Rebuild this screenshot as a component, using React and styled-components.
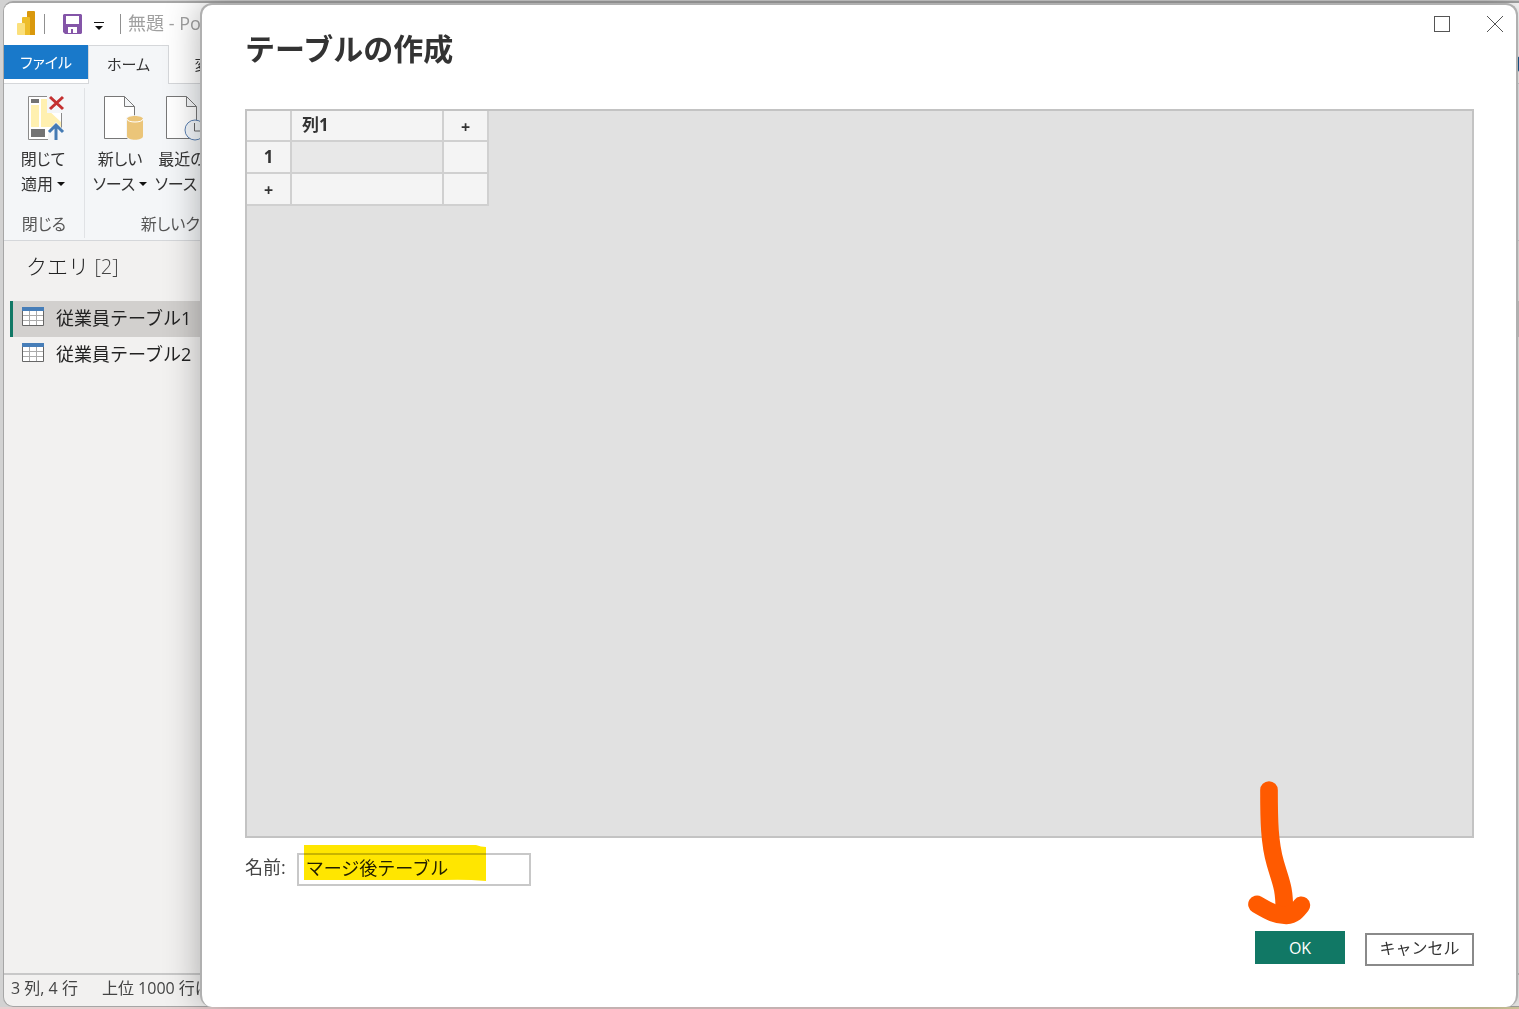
import { useState } from 'react';
import styled, { createGlobalStyle } from 'styled-components';

const App = () => {
  const [name, setName] = useState('マージ後テーブル');

  return (
    <Desktop>
      <GlobalStyle />
      <Window>
        <TitleBar>
          <LogoIcon />
          <Divider />
          <SaveIcon />
          <QuickMenuIcon />
          <Divider />
          <span className="caption">無題 - Power Query</span>
        </TitleBar>
        <Tabs>
          <FileTab type="button">ファイル</FileTab>
          <Tab type="button" $active>
            ホーム
          </Tab>
          <Tab type="button">変換</Tab>
          <HelpDot />
        </Tabs>
        <Ribbon>
          <Group $width={81} $indent={10}>
            <div className="buttons">
              <RibbonButton type="button">
                <CloseApplyIcon />
                <span>閉じて</span>
                <span>
                  適用
                  <Caret />
                </span>
              </RibbonButton>
            </div>
            <div className="groupName">閉じる</div>
          </Group>
          <Group $width={200} $indent={6}>
            <div className="buttons">
              <RibbonButton type="button">
                <NewSourceIcon />
                <span>新しい</span>
                <span>
                  ソース
                  <Caret />
                </span>
              </RibbonButton>
              <RibbonButton type="button">
                <RecentSourceIcon />
                <span>最近の</span>
                <span>
                  ソース
                  <Caret />
                </span>
              </RibbonButton>
            </div>
            <div className="groupName">新しいクエリ</div>
          </Group>
        </Ribbon>
        <Queries>
          <h2>
            クエリ <span>[2]</span>
          </h2>
          <ul>
            <QueryItem $selected>
              <TableIcon />
              従業員テーブル1
            </QueryItem>
            <QueryItem>
              <TableIcon />
              従業員テーブル2
            </QueryItem>
          </ul>
        </Queries>
        <StatusBar>
          <span>3 列, 4 行</span>
          <span>上位 1000 行に</span>
        </StatusBar>
      </Window>

      <Dialog role="dialog" aria-labelledby="dialogTitle">
        <WindowButtons>
          <button type="button" aria-label="最大化">
            <svg width="18" height="18" viewBox="0 0 18 18">
              <rect x="1.5" y="1.5" width="15" height="15" />
            </svg>
          </button>
          <button type="button" aria-label="閉じる">
            <svg width="18" height="18" viewBox="0 0 18 18">
              <path d="M1 1l16 16M17 1L1 17" />
            </svg>
          </button>
        </WindowButtons>
        <DialogTitle id="dialogTitle">テーブルの作成</DialogTitle>
        <GridPanel>
          <Grid>
            <thead>
              <tr>
                <th className="side" aria-label="行" />
                <th className="column">列1</th>
                <th className="side plus">+</th>
              </tr>
            </thead>
            <tbody>
              <tr>
                <th>1</th>
                <td className="selected" />
                <td />
              </tr>
              <tr>
                <th className="plus">+</th>
                <td />
                <td />
              </tr>
            </tbody>
          </Grid>
        </GridPanel>
        <NameRow>
          <label htmlFor="tableName">名前:</label>
          <NameField>
            <input
              id="tableName"
              type="text"
              value={name}
              onChange={(e) => setName(e.target.value)}
            />
            <Marker viewBox="0 0 182 36">
              <path d="M0 0H172Q177 2 182 2V36Q160 34 140 35H0Z" />
            </Marker>
          </NameField>
        </NameRow>
        <Actions>
          <OkWrap>
            <OkButton type="button">OK</OkButton>
            <Arrow viewBox="78 30 198 438">
              <path d="M147 60C147 150 148 218 166 280C182 336 193 350 193 420" />
              <path d="M111 403C150 426 170 436 198 436C222 434 230 424 244 406" />
            </Arrow>
          </OkWrap>
          <CancelButton type="button">キャンセル</CancelButton>
        </Actions>
      </Dialog>
    </Desktop>
  );
};

export default App;

const LogoIcon = () => (
  <svg width="18" height="24" viewBox="0 0 18 24">
    <path d="M10 1q0-1 1-1h6q1 0 1 1v23h-8z" fill="#d9980c" />
    <path d="M5 7q0-1 1-1h6q1 0 1 1v17H5z" fill="#edbd2a" />
    <path d="M0 13q0-1 1-1h6q1 0 1 1v11H1q-1 0-1-1z" fill="#fbe07c" />
  </svg>
);

const SaveIcon = () => (
  <svg width="19" height="20" viewBox="0 0 19 20">
    <path d="M1 0h17l1 1v18l-1 1H2l-2-2V1z" fill="#8455a8" />
    <path d="M3 2h13v8H3zM5 13h9v6h-4v-4H8v4H5z" fill="#fff" />
  </svg>
);

const QuickMenuIcon = () => (
  <svg width="10" height="10" viewBox="0 0 10 10">
    <path d="M0 1h10v1H0zM1 5h8L5 9z" fill="#111" />
  </svg>
);

const CloseApplyIcon = () => (
  <svg width="38" height="46" viewBox="0 0 38 46">
    <path d="M1.500 1.500h33v43h-33z" fill="#fff" stroke="#8a8a8a" />
    <path d="M4 4h8v4H4z" fill="#737373" />
    <path d="M4 10h8v22H4zM14 4h6v28h-6zM20 14l14 13v5H20z" fill="#fff0b0" />
    <path d="M4 34h14v8H4z" fill="#737373" />
    <path d="M20 0h18v18H20zM21 36l8-9 9 9v10H21z" fill="#f4f6f8" />
    <path d="M23 2l13 12M36 2L23 14" stroke="#c43131" strokeWidth="3" />
    <path
      d="M29 45V30M22 37l7-7 7 7"
      fill="none"
      stroke="#457bb4"
      strokeWidth="3"
    />
  </svg>
);

const NewSourceIcon = () => (
  <svg width="40" height="46" viewBox="0 0 40 46">
    <path
      d="M1.500 1.500h20l10 10v32h-30zM21.500 1.500v10h10"
      fill="#fff"
      stroke="#777"
    />
    <path
      d="M23 24c0-5 18-5 18 0v17c0 6-18 6-18 0z"
      fill="#f4f6f8"
    />
    <path d="M24 24c0-4 16-4 16 0v17c0 5-16 5-16 0z" fill="#ebc579" />
    <path d="M24 24c0 4 16 4 16 0" fill="none" stroke="#fff" />
  </svg>
);

const RecentSourceIcon = () => (
  <svg width="40" height="46" viewBox="0 0 40 46">
    <path
      d="M1.500 1.500h20l10 10v32h-30zM21.500 1.500v10h10"
      fill="#fff"
      stroke="#777"
    />
    <circle cx="30" cy="35" r="10" fill="#f4f8fc" stroke="#5b80b2" />
    <path d="M29.500 28v8h6" fill="none" stroke="#666" />
  </svg>
);

const TableIcon = () => (
  <svg width="22" height="20" viewBox="0 0 22 20">
    <path d="M.5 1.500h21v17H.5z" fill="#fff" stroke="#666" />
    <path d="M7.500 4v14M14.500 4v14M1 8.500h20M1 13.500h20" stroke="#aaa" />
    <path d="M0 0h22v4H0z" fill="#477eb8" />
  </svg>
);

const Caret = () => (
  <svg width="8" height="5" viewBox="0 0 8 5">
    <path d="M0 0h8L4 4z" fill="#111" />
  </svg>
);

const GlobalStyle = createGlobalStyle`
  * {
    box-sizing: border-box;
  }

  body {
    margin: 0;
    font-family: 'Open Sans', 'Noto Sans CJK JP', sans-serif;
    font-size: 16px;
    color: #333;
  }

  button,
  input {
    font: inherit;
    color: inherit;
  }

  h1,
  h2,
  ul {
    margin: 0;
    padding: 0;
  }
`;

const Desktop = styled.div`
  position: relative;
  display: flex;
  min-height: 100vh;
  padding: 1px 0 2px 3px;
  overflow: hidden;
  background: linear-gradient(90deg, #e6d0d0 70%, #d8cfa0) bottom / 100% 2px
    no-repeat #d2d2d2;
`;

const Window = styled.div`
  display: flex;
  flex: 1;
  flex-direction: column;
  min-width: 0;
  overflow: hidden;
  border: 1px solid #a6a6a6;
  border-top-width: 2px;
  border-right: 0;
  border-radius: 10px 0 0 10px;
  background: #f2f1f0;
`;

const TitleBar = styled.div`
  display: flex;
  align-items: center;
  height: 42px;
  padding-left: 13px;
  background: #fff;
  white-space: nowrap;

  svg {
    flex: none;
  }

  svg:nth-of-type(1) {
    margin-bottom: 2px;
  }

  svg:nth-of-type(2) {
    margin-left: 18px;
  }

  svg:nth-of-type(3) {
    margin: 4px 7px 0 12px;
  }

  .caption {
    margin-left: 7px;
    padding-bottom: 4px;
    font-size: 18px;
    color: #a0a0a0;
  }
`;

const Divider = styled.span`
  width: 1px;
  height: 20px;
  margin-left: 9px;
  background: #909090;
`;

const Tabs = styled.div`
  display: flex;
  height: 39px;
  background: #fff;
  box-shadow: inset 0 -1px #d5d7da;
  font-feature-settings: 'palt';
`;

const Tab = styled.button`
  width: 81px;
  padding: 0 0 4px;
  border: 1px solid ${({ $active }) => ($active ? '#d5d7da' : 'transparent')};
  border-bottom: 0;
  background: ${({ $active }) => ($active ? '#f4f6f8' : 'transparent')};
  font-size: 15px;
`;

const FileTab = styled(Tab)`
  width: 84px;
  height: 34px;
  padding-bottom: 2px;
  border: 0;
  background: #1979ca;
  color: #fff;
`;

const HelpDot = styled.span`
  width: 18px;
  height: 18px;
  margin: 10px -14px 0 auto;
  border-radius: 50%;
  background: #1a5f96;
`;

const Ribbon = styled.div`
  display: flex;
  height: 157px;
  border-bottom: 1px solid #d5d7da;
  background: #f4f6f8;
`;

const Group = styled.div`
  display: flex;
  flex: none;
  flex-direction: column;
  width: ${({ $width }) => $width}px;
  margin: 4px 0 2px;
  padding-top: 7px;
  border-right: 1px solid #e0e2e5;
  font-size: 16px;
  font-feature-settings: 'palt';

  .buttons {
    display: flex;
    flex: 1;
    gap: 4px;
    padding-left: ${({ $indent }) => $indent}px;
  }

  .groupName {
    padding-bottom: 2px;
    line-height: 24px;
    text-align: center;
    color: #555;
  }
`;

const RibbonButton = styled.button`
  display: flex;
  flex-direction: column;
  align-items: center;
  min-width: 58px;
  padding: 0;
  border: 0;
  background: none;
  line-height: 25px;
  white-space: nowrap;

  > svg {
    margin: 0 0 6px 6px;
  }

  span {
    display: flex;
    align-items: center;
    gap: 4px;
  }
`;

const Queries = styled.nav`
  flex: 1;
  padding: 9px 0 0 6px;

  h2 {
    padding-left: 16px;
    font-size: 21px;
    font-weight: 300;
    line-height: 32px;
    color: #222;
  }

  h2 span {
    font-size: 20px;
    color: #444;
  }

  ul {
    margin-top: 18px;
    list-style: none;
  }
`;

const QueryItem = styled.li`
  display: flex;
  align-items: center;
  gap: 12px;
  height: 36px;
  padding: 0 0 4px 9px;
  border-left: 3px solid ${({ $selected }) => ($selected ? '#117865' : 'transparent')};
  background: ${({ $selected }) => ($selected ? '#d2d0ce' : 'transparent')};
  font-size: 18px;
  color: #222;
`;

const StatusBar = styled.div`
  display: flex;
  gap: 24px;
  height: 33px;
  padding-left: 7px;
  border-top: 2px solid #c8c8c8;
  font-size: 16px;
  line-height: 26px;
  color: #444;
`;

const Dialog = styled.section`
  position: absolute;
  inset: 3px 1px 2px 200px;
  display: flex;
  flex-direction: column;
  padding: 24px 42px 41px 43px;
  border: 2px solid #b0b0b0;
  border-bottom-width: 0;
  border-radius: 12px;
  background: #fff;
  box-shadow: 0 0 36px rgba(0, 0, 0, 0.3);
`;

const WindowButtons = styled.div`
  position: absolute;
  top: 10px;
  right: 12px;
  display: flex;
  gap: 35px;

  button {
    display: flex;
    padding: 0;
    border: 0;
    background: none;
  }

  svg {
    fill: none;
    stroke: #555;
  }
`;

const DialogTitle = styled.h1`
  font-size: 30px;
  line-height: 40px;
`;

const GridPanel = styled.div`
  flex: 1;
  margin-top: 40px;
  border: 2px solid #c3c3c3;
  background: #e1e1e1;
`;

const Grid = styled.table`
  border-spacing: 0;
  font-size: 17px;
  line-height: 24px;

  th,
  td {
    height: 32px;
    padding: 0;
    border: solid #d0d0d0;
    border-width: 0 2px 2px 0;
    background: #f4f4f4;
  }

  thead th {
    height: 31px;
  }

  .side {
    width: 45px;
  }

  .column {
    width: 152px;
    padding: 0 0 2px 10px;
    text-align: left;
  }

  .plus {
    padding-top: 2px;
    font-size: 16px;
  }

  .selected {
    background: #e8e8e8;
  }
`;

const NameRow = styled.div`
  display: flex;
  align-items: center;
  gap: 11px;
  margin-top: 15px;
  font-size: 18px;

  label {
    padding-bottom: 6px;
    line-height: 26px;
    color: #444;
  }
`;

const NameField = styled.div`
  position: relative;

  input {
    display: block;
    width: 234px;
    height: 33px;
    padding: 0 7px 5px;
    border: 2px solid #c8c8c8;
    outline: 0;
    background: #fff;
    color: #222;
  }
`;

const Marker = styled.svg`
  position: absolute;
  top: -8px;
  left: 7px;
  width: 182px;
  fill: #ffe600;
  mix-blend-mode: multiply;
  pointer-events: none;
`;

const Actions = styled.div`
  display: flex;
  justify-content: flex-end;
  gap: 20px;
  height: 35px;
  margin-top: 45px;
`;

const OkWrap = styled.div`
  position: relative;
`;

const OkButton = styled.button`
  width: 90px;
  height: 33px;
  border: 0;
  background: #117865;
  color: #fff;
`;

const CancelButton = styled.button`
  align-self: flex-end;
  width: 109px;
  height: 33px;
  padding: 0 0 4px;
  border: 2px solid #8a8a8a;
  background: #fff;
  line-height: 24px;
`;

const Arrow = styled.svg`
  position: absolute;
  bottom: 40px;
  left: -9px;
  width: 66px;
  fill: none;
  stroke: #ff5a00;
  stroke-width: 53px;
  stroke-linecap: round;
  stroke-linejoin: round;
  pointer-events: none;
`;
